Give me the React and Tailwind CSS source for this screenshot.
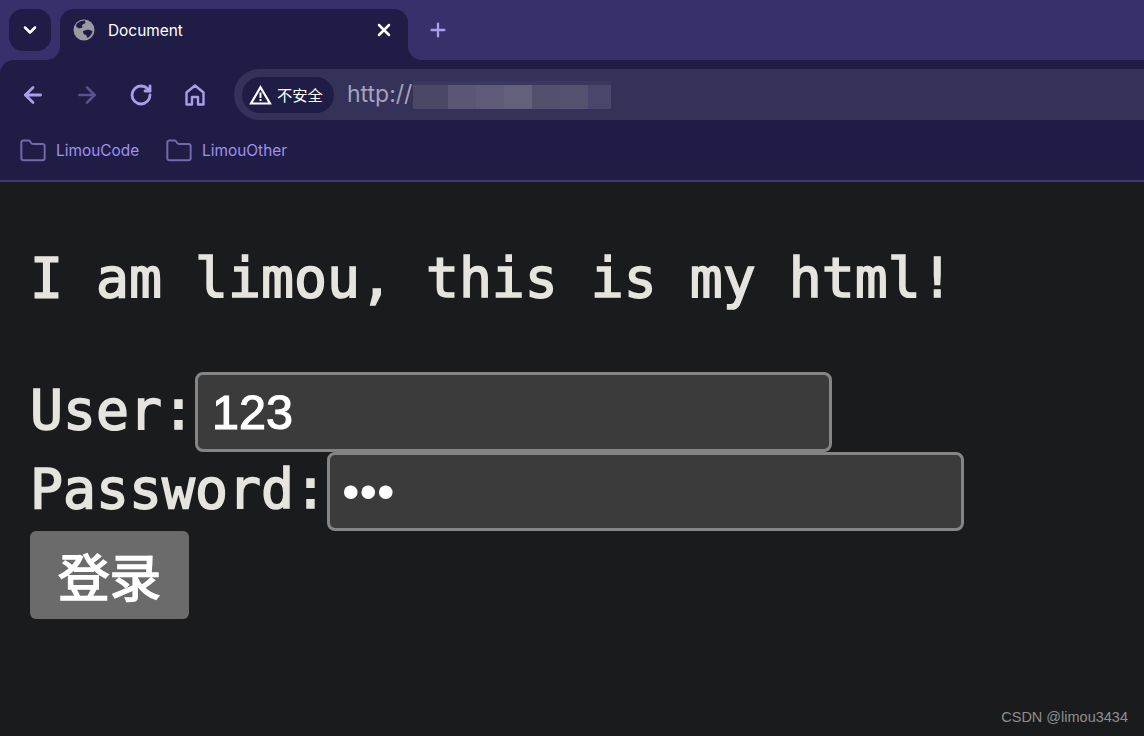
import React from 'react'
import { ArrowLeft, ArrowRight, ChevronDown, Folder, Plus, RotateCw, X } from 'lucide-react'

const blurBlocks = [
    'w-[35px] bg-[#4a4866]',
    'w-[28px] bg-[#5a5674]',
    'w-[28px] bg-[#5e5a78]',
    'w-[28px] bg-[#62607a]',
    'w-[28px] bg-[#52506c]',
    'w-[28px] bg-[#53516d]',
    'w-[23px] bg-[#48466a]',
]

function GlobeIcon() {
    return (
        <svg width="22" height="22" viewBox="0 0 22 22">
            <circle cx="11" cy="11" r="10.5" fill="#9a9aa2" />
            <path d="M3.5 5 C6 2.5 9 1.5 12 1.5 L12.5 4 L9 6 L9.5 8.5 L6 9.5 L3 7.5 Z" fill="#1f1d45" />
            <path d="M10 12 L15 10.5 L19.5 12 C19 15 17 17.5 14.5 19 L13 16 L10.5 15 Z" fill="#1f1d45" />
        </svg>
    )
}

function HomeIcon() {
    return (
        <svg width="22" height="24" viewBox="0 0 22 24" fill="none" stroke="#a99ee9" strokeWidth="2.4" strokeLinejoin="round">
            <path d="M2.5 21.5 V9.5 L11 2.5 L19.5 9.5 V21.5 H14 V14 H8 V21.5 Z" />
        </svg>
    )
}

function WarningIcon() {
    return (
        <svg width="23" height="20" viewBox="0 0 23 20">
            <path d="M11.5 2.2 L21 18.5 H2 Z" fill="none" stroke="#ffffff" strokeWidth="2.2" strokeLinejoin="miter" />
            <rect x="10.5" y="7.5" width="2" height="5.5" fill="#ffffff" />
            <rect x="10.5" y="14" width="2" height="2" fill="#ffffff" />
        </svg>
    )
}

function Bookmark({ name }) {
    return (
        <div className="flex items-center gap-[9px]">
            <Folder size={28} strokeWidth={1.7} className="text-[#716aa6]" />
            <span className="text-[15.4px] text-[#a18ff0] font-['Inter','Noto_Sans',sans-serif]">{name}</span>
        </div>
    )
}

function App() {
    return (
        <div className="relative h-[736px] w-[1144px] overflow-hidden bg-[#1a1b1d]">
            {/* tab strip */}
            <div className="flex h-[60px] bg-[#36316a] pl-[9px] pt-[9px]">
                <div className="flex h-[42px] w-[42px] items-center justify-center rounded-[14px] bg-[#1f1d45] text-white">
                    <ChevronDown size={20} strokeWidth={3} />
                </div>
                <div className="relative ml-[9px] flex h-[51px] w-[348px] items-center rounded-t-[14px] bg-[#1f1d45] pb-[9px] pl-[13px] pr-[14px]">
                    <div className="absolute bottom-0 left-[-14px] h-[14px] w-[14px] bg-[#1f1d45]">
                        <div className="h-full w-full rounded-br-[14px] bg-[#36316a]" />
                    </div>
                    <div className="absolute bottom-0 right-[-14px] h-[14px] w-[14px] bg-[#1f1d45]">
                        <div className="h-full w-full rounded-bl-[14px] bg-[#36316a]" />
                    </div>
                    <GlobeIcon />
                    <span className="ml-[13px] flex-1 pt-[2px] text-[15.4px] text-white font-['Inter','Noto_Sans',sans-serif]">Document</span>
                    <X size={20} strokeWidth={3} className="text-white" />
                </div>
                <div className="ml-[19px] flex h-[42px] items-center">
                    <Plus size={22} strokeWidth={2.5} className="text-[#a99ee9]" />
                </div>
            </div>

            {/* toolbar */}
            <div className="bg-[#36316a]">
                <div className="h-[122px] rounded-tl-[14px] border-b-2 border-[#3f3a6b] bg-[#1f1d45]">
                    <div className="flex h-[69px] items-center pl-[20px]">
                        <ArrowLeft size={26} strokeWidth={2.6} className="text-[#a99ee9]" />
                        <ArrowRight size={26} strokeWidth={2.4} className="ml-[28px] text-[#5a5291]" />
                        <RotateCw size={24} strokeWidth={2.8} className="ml-[29px] text-[#a99ee9]" />
                        <div className="ml-[31px]"><HomeIcon /></div>
                        <div className="ml-[28px] flex h-[51px] flex-1 items-center rounded-l-[26px] bg-[#35325a] pl-[8px]">
                            <div className="flex h-[36px] w-[92px] items-center rounded-[18px] bg-[#1f1d45] pl-[7px]">
                                <WarningIcon />
                                <span className="ml-[5px] text-[15.3px] text-white font-['Noto_Sans_CJK_SC',sans-serif]">不安全</span>
                            </div>
                            <span className="ml-[13px] text-[23px] text-[#a5a3ba] font-['Inter','Noto_Sans',sans-serif]">http://</span>
                            <div className="ml-[1px] flex h-[28px] items-end bg-[#3b3860]">
                                {blurBlocks.map((block) => (
                                    <div key={block} className={`h-[24px] ${block}`} />
                                ))}
                            </div>
                        </div>
                    </div>
                    <div className="flex h-[44px] items-center gap-[26px] pl-[19px]">
                        <Bookmark name="LimouCode" />
                        <Bookmark name="LimouOther" />
                    </div>
                </div>
            </div>

            {/* page */}
            <div className="pl-[30px] text-[54.8px] text-[#e6e4df] font-['DejaVu_Sans_Mono',monospace] [-webkit-text-stroke:1.6px_#e6e4df]">
                <h1 className="mt-[58px] h-[76px] text-[54.8px] font-normal leading-[76px]">I am limou, this is my html!</h1>
                <form className="mt-[56px]">
                    <div className="flex h-[80px] items-center">
                        <label htmlFor="user" className="pb-[4px]">User:</label>
                        <input id="user" type="text" defaultValue="123" className="h-[80px] w-[637px] rounded-[8px] border-[3px] border-[#858585] bg-[#3b3b3b] px-[14px] text-[48.5px] text-white outline-none font-['Liberation_Sans',sans-serif] [-webkit-text-stroke:1.2px_#ffffff]" />
                    </div>
                    <div className="flex h-[79px] items-center">
                        <label htmlFor="password" className="pb-[4px]">Password:</label>
                        <input id="password" type="password" defaultValue="123" className="h-[79px] w-[637px] rounded-[8px] border-[3px] border-[#858585] bg-[#3b3b3b] px-[12px] text-[50px] text-white outline-none font-['Liberation_Sans',sans-serif] [-webkit-text-stroke:0px_#ffffff]" />
                    </div>
                    <button type="button" className="h-[88px] w-[159px] rounded-[6px] bg-[#6b6b6b] text-[51.5px] font-normal text-white font-['Noto_Sans_CJK_SC',sans-serif] [-webkit-text-stroke:1.6px_#ffffff]">登录</button>
                </form>
            </div>

            <span className="absolute bottom-[7px] right-[16px] text-[14.5px] text-[#8f8f8f] font-['Liberation_Sans',sans-serif]">CSDN @limou3434</span>
        </div>
    )
}

export default App
